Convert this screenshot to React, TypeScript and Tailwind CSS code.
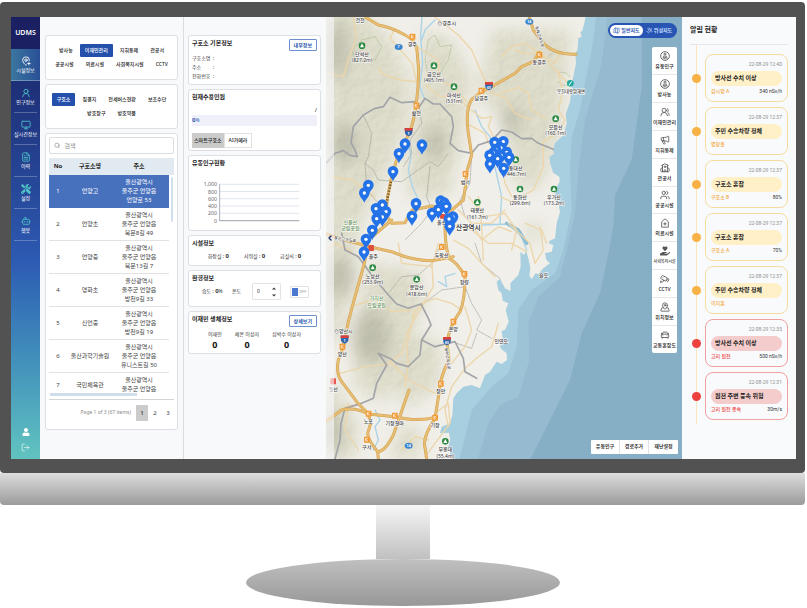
import React from "react";
import {
  Bot,
  CarFront,
  Cctv,
  ChevronLeft,
  FileText,
  LogOut,
  Map as MapIcon,
  MapPinPlus,
  MapPinned,
  Megaphone,
  Monitor,
  Satellite,
  School,
  Search,
  UserRound,
  Users,
  UsersRound,
} from "lucide-react";
import { FaHandHoldingHeart, FaTools, FaUser } from "react-icons/fa";

const FONT = "font-['Noto_Sans','Noto_Sans_CJK_KR',sans-serif]";

/* ---------- side navigation ---------- */

const navItems = [
  { label: "시설정보", Icon: MapPinPlus },
  { label: "인구정보", Icon: UserRound },
  { label: "실시간정보", Icon: Monitor },
  { label: "이력", Icon: FileText },
  { label: "설정", Icon: FaTools },
  { label: "챗봇", Icon: Bot },
];

function Sidebar() {
  return (
    <nav className="flex w-[29px] shrink-0 flex-col bg-linear-to-b from-[#182062] via-[#2d5ab2] via-55% to-[#61c4bf] text-white">
      <div className="flex h-8 items-center justify-center bg-[#1a2062] text-[7px] font-semibold">UDMS</div>
      {navItems.map(({ label, Icon }, i) => (
        <button
          key={label}
          className={
            i === 0
              ? "flex h-8 flex-col items-center justify-center gap-px border-b border-white/30 bg-linear-to-r from-[#3b769f] to-[#2a4f96] text-[5px] leading-[7px] whitespace-nowrap"
              : "mx-[3px] flex h-8 flex-col items-center justify-center gap-px border-b border-white/25 text-[5px] leading-[7px] whitespace-nowrap"
          }
        >
          <Icon className={i === 0 ? "size-[10px]" : "size-[10px] text-[#4fc4c6]"} />
          {label}
        </button>
      ))}
      <div className="mt-auto flex flex-col items-center gap-[7px] pb-[7px]">
        <button aria-label="사용자">
          <FaUser className="size-2" />
        </button>
        <button aria-label="로그아웃">
          <LogOut className="size-[9px] text-white/80" />
        </button>
      </div>
    </nav>
  );
}

/* ---------- facility list ---------- */

const CARD = "rounded-[3px] border border-[#dcdfe3] bg-white";

function ChipRow({ items, active }: { items: string[]; active?: string }) {
  return (
    <div className="flex justify-center gap-0.5">
      {items.map((t) => (
        <button
          key={t}
          className={
            t === active
              ? "h-[13px] rounded-[1px] bg-[#2450ac] px-[5px] text-[5px] font-medium whitespace-nowrap text-white"
              : "h-[13px] px-[5px] text-[5px] font-medium whitespace-nowrap text-[#222]"
          }
        >
          {t}
        </button>
      ))}
    </div>
  );
}

const rows = [
  ["언양고", "울산광역시", "울주군 언양읍", "언양로 53"],
  ["언양초", "울산광역시", "울주군 언양읍", "북문8길 49"],
  ["언양중", "울산광역시", "울주군 언양읍", "북문13길 7"],
  ["영화초", "울산광역시", "울주군 언양읍", "방천9길 33"],
  ["신언중", "울산광역시", "울주군 언양읍", "방천9길 19"],
  ["울산과학기술원", "울산광역시", "울주군 언양읍", "유니스트길 50"],
  ["국민체육관", "울산광역시", "울주군 언양읍"],
];

function FacilityTable() {
  return (
    <div className="relative mt-1 h-[242px] overflow-hidden border-b border-[#d5d5d5]">
      <table className="w-full table-fixed border-separate border-spacing-0 text-center text-[6px] leading-[9px] text-[#444]">
        <colgroup>
          <col className="w-[18px]" />
          <col className="w-[46px]" />
          <col />
          <col className="w-[5px]" />
        </colgroup>
        <thead>
          <tr className="h-[17px] bg-[#e2eaf1] font-bold text-[#222]">
            <th scope="col">No</th>
            <th scope="col">구호소명</th>
            <th scope="col" className="pr-1">
              주소
            </th>
            <td />
          </tr>
        </thead>
        <tbody>
          {rows.map(([name, ...address], i) => {
            const cell = i === 0 ? "bg-[#4770bd] text-white" : i === rows.length - 1 ? "" : "border-b border-[#e2e2e2]";
            return (
              <tr key={name} className={i === rows.length - 1 ? "h-6" : "h-[33px]"}>
                <td className={cell}>{i + 1}</td>
                <td className={cell + " whitespace-nowrap"}>{name}</td>
                <td className={cell + " pr-1 whitespace-nowrap"}>
                  {address.map((line) => (
                    <div key={line}>{line}</div>
                  ))}
                </td>
                <td />
              </tr>
            );
          })}
        </tbody>
      </table>
      <div className="absolute top-[19px] right-px h-[45px] w-[2px] rounded-full bg-[#cfdfee]" />
      <div className="absolute bottom-[3px] left-px h-[3px] w-[87px] bg-[#cfdeea]" />
    </div>
  );
}

function ListColumn() {
  return (
    <section className="flex w-[144px] shrink-0 flex-col gap-1 border-r border-[#dcdce0] bg-[#f8f9fb] px-[5px] pt-[18px] pb-[29px]">
      <div className={CARD + " flex h-[45px] flex-col gap-px pt-2"}>
        <ChipRow items={["방사능", "이재민관리", "지휘통제", "관공서"]} active="이재민관리" />
        <ChipRow items={["공공시설", "의료시설", "사회복지시설", "CCTV"]} />
      </div>
      <div className={CARD + " flex h-[45px] flex-col gap-px pt-2"}>
        <ChipRow items={["구호소", "집결지", "전세버스현황", "보조수단"]} active="구호소" />
        <ChipRow items={["방호장구", "방호약품"]} />
      </div>
      <div className={CARD + " px-[3px] pt-[3px] pb-2"}>
        <label className="flex h-[17px] items-center gap-1 rounded-xs border border-[#ddd] px-1">
          <Search className="size-[7px] text-[#777]" />
          <input
            aria-label="검색"
            placeholder="검색"
            className="w-full min-w-0 bg-transparent text-[6px] leading-[10px] outline-none placeholder:text-[#8a8a8a]"
          />
        </label>
        <FacilityTable />
        <div className="mt-[5px] flex items-center justify-end text-[6px] text-[#444]">
          <span className="mr-[5px] text-[5px] whitespace-nowrap text-[#8a8a8a]">Page 1 of 3 (67 items)</span>
          <button className="h-4 w-[12px] rounded-[1px] bg-[#cbcbcb] font-semibold">1</button>
          <button className="h-4 w-[14px]">2</button>
          <button className="h-4 w-[12px]">3</button>
        </div>
      </div>
    </section>
  );
}

/* ---------- shelter detail ---------- */

function CardTitle({ children }: { children: React.ReactNode }) {
  return <h2 className="text-[6px] leading-[9px] font-bold text-[#222]">{children}</h2>;
}

function OutlineButton({ children }: { children: React.ReactNode }) {
  return (
    <button className="h-3 rounded-[1px] border border-[#6d8fd0] px-1 text-[5px] leading-[9px] font-bold whitespace-nowrap text-[#2d57ad]">
      {children}
    </button>
  );
}

function FlowChart() {
  const ticks = ["1,000", "800", "600", "400", "200", "0"];
  return (
    <svg viewBox="0 0 120 44" className="mt-3 w-full" role="img" aria-label="유동인구현황">
      {ticks.map((t, i) => (
        <g key={t}>
          <text x="24" y={6 + i * 7} textAnchor="end" fontSize="5" fill="#666">
            {t}
          </text>
          <line x1="26" x2="103" y1={4 + i * 7} y2={4 + i * 7} stroke={i === 5 ? "#aeb4ba" : "#dfe6ee"} strokeWidth="1" />
        </g>
      ))}
      <line x1="26.5" x2="26.5" y1="4" y2="39" stroke="#aeb4ba" strokeWidth="1" />
    </svg>
  );
}

function DetailColumn() {
  return (
    <section className="flex w-[142px] shrink-0 flex-col gap-1 bg-[#f8f9fb] pt-[18px] pr-[5px] pl-1 text-[5px] text-[#333]">
      <div className={CARD + " h-[50px] px-[3px] pt-[3px]"}>
        <div className="flex h-[14px] items-start justify-between">
          <CardTitle>구호소 기본정보</CardTitle>
          <OutlineButton>내부정보</OutlineButton>
        </div>
        <dl className="grid grid-cols-[21px_1fr] pt-px leading-[9px]">
          <dt>구호소명</dt>
          <dd>:</dd>
          <dt>주소</dt>
          <dd>:</dd>
          <dt>전화번호</dt>
          <dd>:</dd>
        </dl>
      </div>
      <div className={CARD + " h-[62px] px-[3px] pt-[3px]"}>
        <CardTitle>현재수용인원</CardTitle>
        <p className="pt-1 text-right text-[6px] leading-[9px]">/</p>
        <p className="h-[11px] bg-[#eff0fa] leading-[11px] text-[#2d57ad]">
          <b className="text-[6px]">0</b>%
        </p>
        <div className="mt-[7px] flex">
          <button className="h-[15px] bg-[#cbcbcb] px-0.5 text-[5px] font-medium whitespace-nowrap text-[#222]">스마트구호소</button>
          <button className="h-[15px] border border-[#e2e2e2] px-1 text-[5px] font-medium whitespace-nowrap text-[#222]">AI카메라</button>
        </div>
      </div>
      <div className={CARD + " h-[76px] px-[3px] pt-[3px]"}>
        <CardTitle>유동인구현황</CardTitle>
        <FlowChart />
      </div>
      <div className={CARD + " h-[31px] px-[3px] pt-[3px]"}>
        <CardTitle>시설정보</CardTitle>
        <p className="flex justify-center gap-[15px] pt-1 leading-[9px]">
          {["화장실", "샤워실", "급실식"].map((t) => (
            <span key={t}>
              {t} : <b className="text-[6px]">0</b>
            </span>
          ))}
        </p>
      </div>
      <div className={CARD + " h-[37px] px-[3px] pt-[3px]"}>
        <CardTitle>환경정보</CardTitle>
        <div className="flex items-center pl-[10px]">
          <span className="w-[30px]">
            습도 : <b className="text-[6px]">0</b>%
          </span>
          <label htmlFor="temperature" className="w-5">
            온도
          </label>
          <span className="flex h-[17px] w-[29px] items-center justify-between rounded-[1px] border border-[#e2e2e2] px-1">
            <input id="temperature" defaultValue="0" className="w-3 bg-transparent text-[5px] outline-none" />
            <svg viewBox="0 0 4 10" className="h-[10px] w-1" fill="#333">
              <path d="M0 2.5 2 .5 4 2.5zM0 7.5 2 9.5 4 7.5z" />
            </svg>
          </span>
          <label className="ml-[9px] flex h-3 w-[19px] items-center gap-px rounded-[1px] border border-[#e2e2e2] px-px text-[4px] text-[#999]">
            <input type="checkbox" aria-label="온도 조절" className="h-2 w-[6px] appearance-none bg-[#4a78d0]" />
            OFF
          </label>
        </div>
      </div>
      <div className={CARD + " h-[43px] px-[3px] pt-[3px]"}>
        <div className="flex h-[14px] items-start justify-between">
          <CardTitle>이재민 생체정보</CardTitle>
          <OutlineButton>상세보기</OutlineButton>
        </div>
        <dl className="flex justify-center gap-[13px] pt-px text-center whitespace-nowrap">
          {["이재민", "체온 이상자", "심박수 이상자"].map((t) => (
            <div key={t}>
              <dt className="leading-[9px]">{t}</dt>
              <dd className="text-[9px] leading-3 font-bold text-[#111]">0</dd>
            </div>
          ))}
        </dl>
      </div>
    </section>
  );
}

/* ---------- map ---------- */

const coast =
  "M783 0 L780 30 772 62 766 66 770 80 760 84 757 120 751 130 753 160 742 212 738 250 735 275 722 312 725 340 715 375 690 398 684 420 686 432 673 440 675 460 684 488 703 500 704 515 692 536 690 560 700 580 705 606 695 640 690 685 672 694 674 702 685 705 680 725 660 730 664 750 675 760 655 775 640 792 632 790 620 807 613 798 616 775 610 745 603 722 597 735 586 725 587 770 580 795 556 820 557 843 540 835 525 806 515 815 520 840 530 850 533 872 550 880 542 900 551 935 540 960 530 962 533 985 525 1010 530 1018 545 1030 546 1050 530 1062 515 1055 495 1085 480 1095 465 1135 440 1125 415 1130 395 1150 385 1165 382 1215 375 1240 350 1250 345 1270 372 1268 376 1290 370 1310 380 1347 L380 1360 0 1360 0 0Z";

const minorRoads = [
  "M85 21 L95 80 70 150 55 200 10 190",
  "M210 55 L195 85 235 130 262 160 275 215 225 210 170 190 160 170",
  "M330 21 L400 75 440 120 470 190 500 250 540 262 570 310 620 330",
  "M275 110 L340 150 345 215 380 225 425 275",
  "M300 225 L345 260 395 255 425 290",
  "M440 300 L470 325 500 320 490 350 505 380 525 440 540 520 560 560",
  "M425 340 L480 370 490 400",
  "M570 120 L600 130 643 130 690 160 705 130",
  "M643 130 L690 180 735 225",
  "M643 130 L600 100 560 110 530 140",
  "M700 180 L712 250 700 300 720 330 700 370 680 380 655 395 655 470 625 540 560 575 525 560",
  "M525 250 L580 232 610 250 620 300 660 325",
  "M20 500 L80 510 150 560",
  "M430 560 L480 620 540 610 575 660 560 720",
  "M400 600 L440 640 500 640 540 600",
  "M370 640 L440 660 490 700 560 700 605 725",
  "M385 690 L430 715 470 760 510 800",
  "M440 640 L470 690 520 650 560 665",
  "M460 560 L470 650 475 750",
  "M550 640 L615 700 630 760 655 720 645 650",
  "M600 640 L650 660 665 700",
  "M220 700 L230 760 320 770 340 700",
  "M320 755 L325 830 290 890 250 960 230 1030 190 1060",
  "M90 885 L150 870 200 905 260 900",
  "M260 920 L290 880 330 865 380 880 410 900",
  "M240 1130 L250 1060 245 1010 270 900",
  "M45 1090 L120 1070 200 1060 250 1110 330 1150",
  "M520 940 L500 1010 460 1040 420 1075 380 1130 360 1200 370 1250",
  "M420 890 L440 960 420 1010 380 1060",
  "M330 1210 L370 1180 375 1240 330 1300 300 1340",
  "M80 725 L30 700 3 720",
  "M3 1230 L60 1190 110 1180",
  "M230 1320 L270 1280 310 1290",
  "M100 1320 L60 1260 70 1180",
];

const mainRoads = [
  "M120 21 L160 45 Q200 52 240 75 Q272 90 276 120 L281 180 Q280 240 273 285 Q265 350 245 385 L215 450 200 500 188 560 Q178 620 200 640 L240 638 262 600 320 588 375 605 415 570 Q424 520 424 490 L440 435 430 370 Q420 300 440 268 L470 245 500 230 570 190 590 170 625 155 643 128",
  "M200 630 L130 690 118 760 90 860 70 935 55 1010 40 1050 Q32 1090 50 1115 L95 1175 130 1212 210 1220 Q280 1236 330 1222",
  "M3 672 L60 690 140 712 200 725 Q260 752 320 752 L385 740",
  "M360 620 Q358 700 372 745 Q400 760 420 800 Q420 870 405 905 Q372 950 366 1000 L372 1050 Q345 1100 342 1150 L330 1225 Q300 1270 298 1300 L305 1347",
  "M252 1140 L226 1215 205 1275 Q180 1325 158 1325 Q128 1290 128 1270 L137 1240 130 1212",
  "M158 1325 L160 1347",
  "M613 21 L625 60 655 100 Q690 135 753 133",
  "M3 1235 L50 1200 Q90 1190 130 1212",
];

const borders = [
  "M3 460 L30 430 55 422 75 436 97 440 90 420 78 398 85 350 115 315 150 295 175 290 195 262 230 278 270 275 283 290 300 265 325 282 345 282 380 320 385 350 375 400 400 422 440 430 460 405 500 392 530 360 560 366 590 386 620 385 640 400 685 418",
  "M50 670 L60 720 100 740 140 795 190 855 215 882 250 895 288 882 310 925 318 945 290 990 285 1035 250 1070 215 1060 200 1048 160 1030 185 1065 155 1120 145 1165 110 1180 60 1195 48 1240 45 1290 30 1347",
  "M290 990 L330 1010 390 995 415 1045 420 1085 455 1105",
];

const dashed = [
  "M115 315 L140 370 130 440 120 460 145 480 160 510 230 515 280 480 315 455 340 470 370 430",
  "M283 290 L290 340 255 390 260 430 235 470",
  "M315 470 L305 560 320 600 290 640 240 690",
  "M120 460 L125 540 160 580",
  "M440 435 L435 520 405 570 420 620",
  "M190 850 L230 800 280 795 320 760 350 700",
  "M290 885 L350 840 420 830 440 880 470 930 455 960 500 985",
  "M395 1000 L440 1015 455 970",
  "M525 806 L470 760 450 700",
];

const trails = [
  "M310 90 L330 75 345 110 380 105 370 150 345 190 310 200 300 150Z",
  "M110 90 L150 80 170 110 150 150 90 150 80 120Z",
  "M700 190 Q720 180 735 200 M700 215 Q710 230 735 225",
];

const streams = [
  "M291 21 L287 80 293 160 284 230 300 270",
  "M330 30 L300 60 290 90",
  "M250 400 L258 440 250 480 262 530 285 580",
  "M450 300 L470 350 495 380 505 450 530 560 525 640",
  "M340 815 L365 830 360 800 390 790",
  "M150 1250 L160 1290 145 1320",
  "M150 1200 L165 1230 150 1250",
  "M470 645 L550 642 590 680 605 720",
];

const pins = [
  [240, 403], [222, 432], [291, 406], [204, 486], [130, 527], [118, 550], [172, 586], [153, 597], [183, 606],
  [172, 622], [155, 627], [142, 662], [123, 689], [117, 727], [273, 582], [261, 620], [347, 574], [358, 580],
  [364, 590], [340, 600], [321, 611], [384, 622], [372, 628], [374, 650], [535, 396], [509, 398], [528, 415],
  [513, 420], [505, 430], [545, 428], [528, 437], [494, 437], [552, 443], [518, 447], [495, 463], [536, 476],
];

const peaks: [number, number, string, string][] = [
  [111, 107, "단석산", "(827.2m)"],
  [327, 167, "금오산", "(495.1m)"],
  [387, 230, "마석산", "(531m)"],
  [457, 577, "태봉산", "(161.7m)"],
  [692, 326, "모팔산", "(160.1m)"],
  [572, 449, "동대산", "(446.7m)"],
  [585, 537, "동화산", "(299.6m)"],
  [687, 537, "우가산", "(173.2m)"],
  [143, 773, "노상산", "(253.9m)"],
  [275, 808, "문암산", "(418.6m)"],
  [361, 1294, "부흥대", "(55.4m)"],
];

const interchanges: [number, number, string][] = [
  [262, 80, "경주"],
  [274, 287, "활천"],
  [469, 242, "남경주"],
  [421, 492, "범서"],
  [643, 134, "동경주"],
  [350, 711, "두왕산"],
  [418, 792, "청량"],
  [385, 935, "온양"],
  [52, 1010, "양산"],
  [347, 1121, "장안"],
  [130, 1211, "노포"],
  [209, 1217, "기장철마"],
  [330, 1223, "기장"],
  [125, 1289, "구서"],
];

function Shield({ x, y, n }: { x: number; y: number; n: string }) {
  return (
    <g transform={`translate(${x} ${y})`}>
      <path d="M-12 -11H12L11 3Q10 10 0 13Q-10 10-11 3Z" fill="#2f64ad" />
      <path d="M-12 -12H12V-4H-12Z" fill="#d8413c" />
      <text y="8" fontSize="11" fontWeight="700" fill="#fff" textAnchor="middle">
        {n}
      </text>
    </g>
  );
}

function MapCanvas() {
  return (
    <svg viewBox="3 21 1068 1326" preserveAspectRatio="xMinYMin slice" className="absolute inset-0 size-full" role="img" aria-label="울산 지도">
      <defs>
        <filter id="soft" x="-30%" y="-30%" width="160%" height="160%">
          <feGaussianBlur stdDeviation="22" />
        </filter>
        <filter id="relief" x="0" y="0" width="100%" height="100%">
          <feTurbulence type="fractalNoise" baseFrequency="0.032" numOctaves="3" seed="7" />
          <feDiffuseLighting surfaceScale="6" lightingColor="#fff">
            <feDistantLight azimuth="225" elevation="58" />
          </feDiffuseLighting>
        </filter>
        <clipPath id="land">
          <path d={coast} />
        </clipPath>
        <mask id="hills">
          <g filter="url(#soft)" fill="#fff">
            <path d="M0 0H110L200 90 250 200 250 330 200 460 150 560 100 660 80 850 40 1000 0 1000Z" />
            <path d="M300 60L380 90 440 200 410 400 370 560 250 560 240 470 270 330Z" />
            <path d="M500 60L740 60 700 400 640 540 560 520 540 330 460 260Z" />
            <path d="M130 760L280 780 300 880 240 1020 180 1180 90 1130 80 1000Z" />
            <path d="M240 960L350 1000 340 1130 240 1200 200 1100Z" />
            <path d="M0 1080L100 1240 90 1347 0 1347Z M230 1240L290 1260 280 1347 190 1347Z" />
            <path d="M600 640L650 640 640 700 610 690Z" />
          </g>
        </mask>
      </defs>
      <rect width="1100" height="1360" fill="#86aec5" />
      <path d="M950 0V230L920 450 870 555 865 650 850 730 825 850 770 970 735 1110 685 1210 640 1300 610 1360H0V0Z" fill="#96bbd0" />
      <path d="M850 0L830 160 780 330 760 480 750 610 735 680 705 800 640 860 610 940 613 1050 580 1160 525 1185 490 1240 455 1360H0V0Z" fill="#9dc4d6" />
      <path d="M815 0L805 90 765 300 740 380 735 480 740 600 715 720 690 790 620 840 580 900 575 1010 550 1090 500 1130 440 1200 400 1360H0V0Z" fill="#a8cfdf" />
      <path d={coast} fill="#f1efe9" />
      <g clipPath="url(#land)">
        <g mask="url(#hills)">
          <rect width="800" height="1360" fill="#e0dfcd" />
          <rect width="800" height="1360" filter="url(#relief)" opacity=".2" className="mix-blend-multiply" />
        </g>
        <g filter="url(#soft)" fill="#8a8a78" opacity=".35">
          <ellipse cx="40" cy="120" rx="30" ry="90" />
          <ellipse cx="60" cy="400" rx="40" ry="60" />
          <ellipse cx="330" cy="400" rx="30" ry="50" />
          <ellipse cx="140" cy="980" rx="55" ry="80" />
          <ellipse cx="45" cy="800" rx="40" ry="60" />
          <ellipse cx="560" cy="330" rx="30" ry="40" />
          <ellipse cx="20" cy="1270" rx="30" ry="60" />
        </g>
      </g>
      <g fill="none" strokeLinejoin="round" strokeLinecap="round">
        {streams.map((d) => (
          <path key={d} d={d} stroke="#a9d3e8" strokeWidth="4" />
        ))}
        <path d="M545 640L580 660 605 700" stroke="#8fbdd4" strokeWidth="10" />
        {trails.map((d) => (
          <path key={d} d={d} stroke="#a9bb8c" strokeWidth="2" strokeDasharray="5 4" />
        ))}
        {dashed.map((d) => (
          <path key={d} d={d} stroke="#a3a39d" strokeWidth="2" strokeDasharray="8 3" />
        ))}
        {minorRoads.map((d) => (
          <path key={d} d={d} stroke="#ecd6aa" strokeWidth="4" />
        ))}
        {borders.map((d) => (
          <path key={d} d={d} stroke="#a2a4a8" strokeWidth="5" />
        ))}
        {mainRoads.map((d) => (
          <path key={d} d={d} stroke="#d2a14e" strokeWidth="9" />
        ))}
        {mainRoads.map((d) => (
          <path key={d} d={d} stroke="#e6bd72" strokeWidth="6" />
        ))}
        <path d="M198 515L182 590" stroke="#6b5430" strokeWidth="7" strokeDasharray="4 5" strokeLinecap="butt" />
      </g>
      <g fontSize="15" fontWeight="500" fill="#444" textAnchor="middle" stroke="#fff" strokeWidth="3" strokeLinejoin="round" paintOrder="stroke">
        {interchanges.map(([x, y, t]) => (
          <g key={t}>
            <rect x={x - 8} y={y - 9} width="17" height="18" rx="2" fill="#f19a35" stroke="none" />
            <path d={`M${x - 3} ${y - 5}V${y + 5}M${x + 4} ${y - 5}L${x - 3} ${y}L${x + 4} ${y + 5}`} stroke="#fff" strokeWidth="2" fill="none" />
            <text x={x} y={y + 29}>
              {t}
            </text>
          </g>
        ))}
        {peaks.map(([x, y, name, height]) => (
          <g key={name}>
            <circle cx={x} cy={y} r="10" fill="#2c8a45" stroke="none" />
            <path d={`M${x - 6} ${y + 5}L${x} ${y - 7}L${x + 6} ${y + 5}Z`} fill="#fff" stroke="none" />
            <text x={x} y={y + 30}>
              {name}
            </text>
            <text x={x} y={y + 49}>
              {height}
            </text>
          </g>
        ))}
        <text x="105" y="36">건천</text>
        <text x="365" y="46">⊙경주시</text>
        <text x="738" y="248" fontSize="13">봉길대왕암해변</text>
        <text x="145" y="743">울주</text>
        <text x="55" y="969">⊙양산시</text>
        <text x="25" y="1144">일산</text>
        <text x="529" y="1000">인연도</text>
        <text x="656" y="801">슬도</text>
        <text x="350" y="643">울산</text>
        <text x="430" y="661" fontSize="20" fontWeight="700">산광역시</text>
        <text x="60" y="692" fontSize="12" transform="rotate(8 60 692)">울산고속도로</text>
        <text x="368" y="1050" fontSize="12" transform="rotate(82 368 1046)">동해고속도로</text>
        <text x="640" y="82" fontSize="12" transform="rotate(72 640 82)">동해고속도로</text>
        <g fill="#5f8f55">
          <text x="76" y="642">신불산</text>
          <text x="76" y="661">군립공원</text>
          <text x="155" y="871">가지산</text>
          <text x="155" y="890">도립공원</text>
        </g>
      </g>
      <circle cx="736" cy="220" r="10" fill="#1fa9a0" />
      <path d="M732 226L740 214" stroke="#fff" strokeWidth="3" />
      <g fontSize="11" fontWeight="700" fill="#fff" textAnchor="middle">
        {[[221, 111, "7"], [613, 35, "14"], [251, 1307, "14"]].map(([x, y, n]) => (
          <g key={`${x}`} transform={`translate(${x} ${y})`}>
            <ellipse rx="12" ry="9" fill="#3b86cf" />
            <text y="4">{n}</text>
          </g>
        ))}
        <rect x="16" y="1105" width="17" height="18" rx="2" fill="#e85a4f" />
        <rect x="130" y="705" width="17" height="18" rx="2" fill="#e0503f" />
        <rect x="345" y="612" width="17" height="14" rx="2" fill="#e0503f" />
      </g>
      <Shield x={251} y={366} n="1" />
      <Shield x={492} y={228} n="65" />
      <Shield x={59} y={988} n="1" />
      <Shield x={366} y={993} n="65" />
      {pins.map(([x, y]) => (
        <g key={`${x}-${y}`} transform={`translate(${x} ${y})`}>
          <path d="M0 28C-5 16-16 9-16-2A16 16 0 0 1 16-2C16 9 5 16 0 28Z" fill="#2472e8" />
          <circle cy="-1" r="5" fill="#fff" />
        </g>
      ))}
    </svg>
  );
}

type IconProps = { className?: string; strokeWidth?: number };

function PersonInCircle({ className }: IconProps) {
  return (
    <svg viewBox="0 0 24 24" fill="none" stroke="currentColor" strokeWidth="2" className={className}>
      <circle cx="12" cy="12" r="10.5" />
      <circle cx="12" cy="7.5" r="2.5" />
      <path d="M10 11L6.5 18M14 11L17.500 18M9 14.500H15M10 20V15M14 20V15" />
    </svg>
  );
}

function ClinicTag({ className }: IconProps) {
  return (
    <svg viewBox="0 0 24 24" fill="none" stroke="currentColor" strokeWidth="2" strokeLinejoin="round" className={className}>
      <path d="M4 22V9L12 2L20 9V22Z" />
      <path d="M12 10V18M8 14H16" />
    </svg>
  );
}

const layers = [
  { label: "유동인구", Icon: PersonInCircle },
  { label: "방사능", Icon: PersonInCircle },
  { label: "이재민관리", Icon: UsersRound },
  { label: "지휘통제", Icon: Megaphone },
  { label: "관공서", Icon: School },
  { label: "공공시설", Icon: Users },
  { label: "의료시설", Icon: ClinicTag },
  { label: "사회복지시설", Icon: FaHandHoldingHeart },
  { label: "CCTV", Icon: Cctv },
  { label: "위치정보", Icon: MapPinned },
  { label: "교통혼잡도", Icon: CarFront },
];

function MapPanel() {
  return (
    <section className="relative min-w-0 flex-1 overflow-hidden">
      <MapCanvas />
      <button aria-label="패널 접기" className="absolute inset-y-0 left-0 flex w-2 items-center bg-[#f8f9fb]/60">
        <ChevronLeft className="size-2 text-[#1c2e6e]" strokeWidth={4} />
      </button>
      <div className="absolute top-[6px] right-[5px] flex h-[15px] items-center rounded-full bg-[#2854b4] px-0.5 text-[5px] font-bold whitespace-nowrap">
        <button className="flex h-[11px] w-[33px] items-center justify-center gap-px rounded-full bg-white text-[#2854b4]">
          <MapIcon className="size-[7px]" />
          일반지도
        </button>
        <button className="flex h-[11px] w-8 items-center justify-center gap-px text-[#cfe0ff]">
          <Satellite className="size-[7px]" />
          위성지도
        </button>
      </div>
      <div className="absolute top-[30px] right-[5px] flex h-[306px] w-[25px] flex-col overflow-hidden rounded-xs bg-white">
        {layers.map(({ label, Icon }) => (
          <button
            key={label}
            className={
              label.length > 5
                ? "flex flex-1 flex-col items-center justify-center gap-0.5 border-b border-[#e6e6e6] text-[4px] leading-[7px] font-medium whitespace-nowrap text-[#222]"
                : "flex flex-1 flex-col items-center justify-center gap-0.5 border-b border-[#e6e6e6] text-[5px] leading-[7px] font-medium whitespace-nowrap text-[#222] last:border-b-0"
            }
          >
            <Icon className="size-[10px] text-[#555]" />
            {label}
          </button>
        ))}
      </div>
      <div className="absolute right-1 bottom-[5px] flex overflow-hidden rounded-[1px] bg-white">
        {["유동인구", "경로추가", "재난설정"].map((t) => (
          <button key={t} className="h-[14px] w-[29px] border-r border-[#e2e2e2] text-[5px] font-bold whitespace-nowrap text-[#333] last:border-r-0">
            {t}
          </button>
        ))}
      </div>
    </section>
  );
}

/* ---------- alerts ---------- */

const alerts = [
  { time: "22-08-29 12:40", title: "방사선 수치 이상", place: "감시망 A", value: "340 nSv/h", severe: false },
  { time: "22-08-29 12:37", title: "주민 수송차량 정체", place: "명창윤", value: "", severe: false },
  { time: "22-08-29 12:37", title: "구호소 혼잡", place: "구호소 B", value: "80%", severe: false },
  { time: "22-08-29 12:37", title: "구호소 혼잡", place: "구호소 A", value: "70%", severe: false },
  { time: "22-08-29 12:37", title: "주민 수송차량 정체", place: "이지훈", value: "", severe: false },
  { time: "22-08-29 12:35", title: "방사선 수치 이상", place: "고리 원전", value: "500 nSv/h", severe: true },
  { time: "22-08-29 12:31", title: "원전 주변 풍속 위험", place: "고리 원전 풍속", value: "30m/s", severe: true },
];

function AlertsColumn() {
  return (
    <aside className="w-[114px] shrink-0 bg-[#f8fafc] px-2 pt-2 font-[Roboto,'Noto_Sans_CJK_KR',sans-serif]">
      <h2 className="h-[19px] text-[7px] leading-[11px] font-bold text-[#222]">알림 현황</h2>
      <ol className="relative flex flex-col gap-[5px] border-t border-[#e4e8ec] pt-[9px] pb-1">
        <div className="absolute inset-y-0 left-[6px] w-px bg-[#fae6bf]" />
        {alerts.map((a, i) => (
          <li key={i} className="flex items-center gap-1">
            <span
              className={
                a.severe
                  ? "relative ml-[2px] size-[9px] shrink-0 rounded-full bg-[#ef4040]"
                  : "relative ml-[2px] size-[9px] shrink-0 rounded-full bg-[#f8b144]"
              }
            />
            <article
              className={
                a.severe
                  ? "h-12 min-w-0 flex-1 rounded-lg border border-[#f0a09e] px-[5px] pt-[6px] text-[5px] leading-[7px]"
                  : "h-12 min-w-0 flex-1 rounded-lg border border-[#f7dc9f] px-[5px] pt-[6px] text-[5px] leading-[7px]"
              }
            >
              <time className="block text-right text-[#8f8f8f]">{a.time}</time>
              <h3
                className={
                  a.severe
                    ? "mt-[3px] h-[15px] rounded-full bg-[#f5cccc] px-1 text-[6px] leading-[14px] font-bold whitespace-nowrap text-[#222]"
                    : "mt-[3px] h-[15px] rounded-full bg-[#fff0c8] px-1 text-[6px] leading-[14px] font-bold whitespace-nowrap text-[#222]"
                }
              >
                {a.title}
              </h3>
              <p className="mt-0.5 flex justify-between whitespace-nowrap">
                <span className={a.severe ? "font-medium text-[#ee4a48]" : "font-medium text-[#f2aa45]"}>{a.place}</span>
                <span className="text-[#333]">{a.value}</span>
              </p>
            </article>
          </li>
        ))}
      </ol>
    </aside>
  );
}

export default function App() {
  return (
    <div className={FONT + " bg-white"}>
      <div className="mr-0.5 pt-0.5">
        <div className="rounded-t-sm rounded-b-sm bg-[#525252] pt-[15px] pr-[9px] pb-[14px] pl-[11px]">
          <main className="flex">
            <Sidebar />
            <ListColumn />
            <DetailColumn />
            <MapPanel />
            <AlertsColumn />
          </main>
        </div>
        <div className="h-8 rounded-b-sm bg-linear-to-b from-[#dedede] to-[#9b9b9b]" />
        <div className="mx-auto h-[54px] w-[54px] bg-linear-to-b from-[#f6f6f6] to-[#c0c0c0]" />
        <div className="mx-auto h-[47px] w-[314px] rounded-[50%] bg-linear-to-b from-[#c0c0c0] to-[#989898]" />
      </div>
    </div>
  );
}
